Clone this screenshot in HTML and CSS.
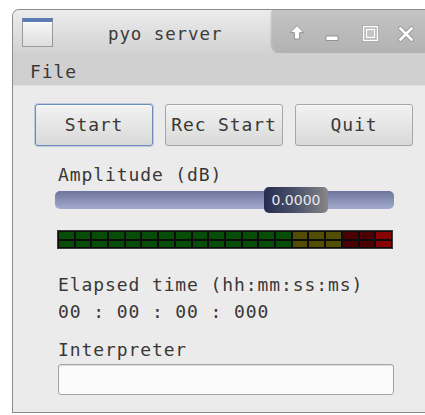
FILE: index.html
```html
<!DOCTYPE html>
<html>
<head>
<meta charset="utf-8">
<title>pyo server</title>
<link rel="stylesheet" href="styles.css">
</head>
<body>
<div class="window">
  <div class="titlebar">
    <div class="app-icon"></div>
    <div class="title">pyo server</div>
    <div class="controls">
      <svg class="ctl ctl-up" width="16" height="17" viewBox="0 0 16 17">
        <path d="M8 1.5 L14.8 8.6 H10.6 V15 H5.4 V8.6 H1.2 Z" fill="#fff" stroke="#8c8c8c" stroke-width="0.9" stroke-linejoin="round"/>
      </svg>
      <svg class="ctl ctl-min" width="14" height="16" viewBox="0 0 14 16">
        <rect x="1" y="10" width="12" height="4.5" fill="#fff" stroke="#8c8c8c" stroke-width="0.9"/>
      </svg>
      <svg class="ctl ctl-max" width="17" height="17" viewBox="0 0 17 17">
        <rect x="1.2" y="1.2" width="14.6" height="14.6" fill="none" stroke="#8c8c8c" stroke-width="2.2"/>
        <rect x="1.5" y="1.5" width="14" height="14" fill="none" stroke="#fff" stroke-width="1.6"/>
        <rect x="4.5" y="4.5" width="8" height="8" fill="#c4c4c4" stroke="#fff" stroke-width="1.2"/>
      </svg>
      <svg class="ctl ctl-close" width="16" height="16" viewBox="0 0 16 16">
        <path d="M2.5 2.5 L13.5 13.5 M13.5 2.5 L2.5 13.5" stroke="#8c8c8c" stroke-width="4.4" stroke-linecap="square"/>
        <path d="M2.5 2.5 L13.5 13.5 M13.5 2.5 L2.5 13.5" stroke="#fff" stroke-width="2.8" stroke-linecap="square"/>
      </svg>
    </div>
  </div>
  <div class="menubar"><span class="menu-item">File</span></div>
  <div class="content">
    <div class="button-row">
      <button class="btn btn-focus">Start</button>
      <button class="btn">Rec Start</button>
      <button class="btn">Quit</button>
    </div>
    <div class="label label-amp">Amplitude (dB)</div>
    <div class="slider">
      <div class="track"></div>
      <div class="knob">0.0000</div>
    </div>
    <div class="vu">
      <span class="g"></span><span class="g"></span><span class="g"></span><span class="g"></span><span class="g"></span><span class="g"></span><span class="g"></span><span class="g"></span><span class="g"></span><span class="g"></span><span class="g"></span><span class="g"></span><span class="g"></span><span class="g"></span><span class="y"></span><span class="y"></span><span class="y"></span><span class="r"></span><span class="r"></span><span class="rr"></span>
      <span class="g"></span><span class="g"></span><span class="g"></span><span class="g"></span><span class="g"></span><span class="g"></span><span class="g"></span><span class="g"></span><span class="g"></span><span class="g"></span><span class="g"></span><span class="g"></span><span class="g"></span><span class="g"></span><span class="y"></span><span class="y"></span><span class="y"></span><span class="r"></span><span class="r"></span><span class="rr"></span>
    </div>
    <div class="label label-time">Elapsed time (hh:mm:ss:ms)</div>
    <div class="label label-clock">00 : 00 : 00 : 000</div>
    <div class="label label-interp">Interpreter</div>
    <input class="entry" type="text">
  </div>
</div>
</body>
</html>
```
FILE: styles.css
```css
html, body {
  margin: 0;
  padding: 0;
  background: #ffffff;
  overflow: hidden;
}

body {
  width: 425px;
  height: 415px;
  font-family: "DejaVu Sans Mono", monospace;
  font-size: 18px;
  letter-spacing: 0.9px;
  color: #3a3836;
}

.window {
  margin: 9px 0 0 12px;
  width: 413px;
  height: 404px;
  border: 1px solid #8c8c8c;
  border-right: none;
  border-radius: 7px 0 0 0;
  background: #ebebeb;
  display: flex;
  flex-direction: column;
  overflow: hidden;
  box-sizing: border-box;
}

/* title bar with the window icon, caption and control tab */
.titlebar {
  height: 43px;
  display: flex;
  align-items: stretch;
  background: linear-gradient(#ececec, #d2d2d2);
  flex: none;
}

.app-icon {
  width: 31px;
  height: 29px;
  margin: 8px 0 0 9px;
  border: 1px solid #9a9a9a;
  box-sizing: border-box;
  background: linear-gradient(#f6f6f6, #dedede);
  border-top: 4px solid #5a7cb0;
  box-shadow: inset 0 1px 0 #fff;
}

.title {
  margin: 0 0 0 55px;
  line-height: 43px;
  padding-top: 3px;
  font-size: 17.5px;
  color: #3d3b39;
}

.controls {
  margin-left: auto;
  width: 153px;
  display: flex;
  align-items: center;
  padding: 4px 0 0 17px;
  background: linear-gradient(#c4c4c4, #b2b2b2);
  border-bottom-left-radius: 10px;
  box-shadow: -1px 1px 2px rgba(0, 0, 0, 0.18);
  box-sizing: border-box;
}

.ctl {
  flex: none;
}

.ctl-up { margin-right: 20px; margin-top: -2px; }
.ctl-min { margin-right: 23px; }
.ctl-max { margin-right: 19px; margin-top: -1px; }

/* menu bar */
.menubar {
  height: 32px;
  background: #d0d0d0;
  flex: none;
  display: flex;
  align-items: center;
  padding-left: 17px;
}

.menu-item {
  padding-top: 4px;
}

/* main panel */
.content {
  flex: 1;
  display: flex;
  flex-direction: column;
  padding: 18px 0 0 45px;
  border-top: 1px solid #e2e2e2;
}

.button-row {
  display: flex;
  gap: 12px;
  margin-left: -23px;
}

.btn {
  width: 118px;
  height: 42px;
  font-family: "DejaVu Sans Mono", monospace;
  font-size: 18px;
  letter-spacing: 0.9px;
  color: #3a3836;
  background: linear-gradient(#f2f2f2, #d9d9d9);
  border: 1px solid #a6a6a6;
  border-radius: 3px;
  padding: 0 0 2px;
  box-shadow: inset 0 1px 0 #fafafa;
}

.btn-focus {
  border-color: #6b8cbc;
  box-shadow: 0 0 0 1px rgba(107, 140, 188, 0.35), inset 0 1px 0 #fafafa;
}

.label {
  line-height: 20px;
  height: 20px;
}

.label-amp { margin-top: 19px; }
.label-time { margin-top: 26px; }
.label-clock { margin-top: 7px; }
.label-interp { margin-top: 18px; }

/* amplitude slider */
.slider {
  position: relative;
  margin: 2px 0 0 -3px;
  width: 339px;
  height: 26px;
  display: flex;
  align-items: center;
}

.track {
  width: 100%;
  height: 18px;
  border-radius: 5px;
  background: linear-gradient(#6c7599, #8d96ba 60%, #a4acce);
}

.knob {
  position: absolute;
  left: 209px;
  top: 0;
  width: 64px;
  height: 26px;
  border-radius: 5px;
  background: linear-gradient(90deg, #252e50, #4b5269 50%, #878787);
  color: #e6e8f0;
  font-family: "DejaVu Sans", sans-serif;
  font-size: 14px;
  letter-spacing: 0;
  line-height: 26px;
  text-align: center;
}

/* level meter */
.vu {
  margin: 17px 0 0 -1px;
  width: 336px;
  height: 19px;
  box-sizing: border-box;
  background: #0c0c0c;
  border: 1px solid #3a3a3a;
  padding: 1px;
  display: grid;
  grid-template-columns: repeat(20, 1fr);
  grid-template-rows: 1fr 1fr;
  gap: 2px;
}

.vu .g { background: #064e08; }
.vu .y { background: #534d02; }
.vu .r { background: #4c0002; }
.vu .rr { background: #8a0204; }

/* interpreter entry */
.entry {
  margin-top: 4px;
  width: 336px;
  height: 31px;
  box-sizing: border-box;
  border: 1px solid #a4a4a4;
  border-radius: 3px;
  background: #fbfbfb;
  box-shadow: inset 0 1px 1px rgba(0, 0, 0, 0.12);
  outline: none;
}
```
